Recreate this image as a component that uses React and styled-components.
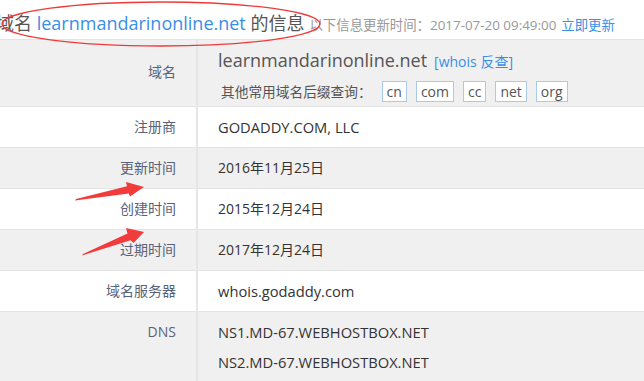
import React from "react";
import styled, { createGlobalStyle } from "styled-components";

const Global = createGlobalStyle`
  html, body { margin: 0; padding: 0; background: #fff; }
  body {
    font-family: "Open Sans", "Noto Sans CJK SC", sans-serif;
    overflow: hidden;
    width: 644px;
    height: 381px;
  }
`;

const Page = styled.div`
  position: relative;
  width: 644px;
  height: 381px;
  overflow: hidden;
`;

const Header = styled.div`
  display: flex;
  align-items: baseline;
  height: 39px;
  margin-left: -4px;
  white-space: nowrap;
`;

const Title = styled.h1`
  margin: 0;
  font-size: 18px;
  font-weight: normal;
  color: #555;
  line-height: 46px;
`;

const TitleLink = styled.span`
  color: #3a8ee6;
`;

const Meta = styled.span`
  margin-left: 5px;
  font-size: 13.4px;
  color: #999;
`;

const MetaLink = styled.a`
  margin-left: 5px;
  color: #3a8ee6;
  text-decoration: none;
`;

const Table = styled.div`
  display: grid;
  grid-template-columns: 198px 1fr;
  border-top: 1px solid #e4e4e4;
  width: 660px;
`;

const Label = styled.div`
  background: ${(p) => (p.$alt ? "#f0f0f0" : "#fff")};
  border-right: 2px solid #e6e6e6;
  border-bottom: 1px solid #e4e4e4;
  height: ${(p) => p.$h}px;
  box-sizing: border-box;
  text-align: right;
  padding-right: 20px;
  padding-top: ${(p) => p.$pt || 11}px;
  font-size: 14px;
  color: #5a6278;
  line-height: 18px;
`;

const Value = styled.div`
  background: ${(p) => (p.$alt ? "#f0f0f0" : "#fff")};
  border-bottom: 1px solid #e4e4e4;
  height: ${(p) => p.$h}px;
  box-sizing: border-box;
  padding-left: 20px;
  padding-top: ${(p) => p.$pt || 11}px;
  font-size: ${(p) => (p.$latin ? "14.7px" : "14px")};
  color: #333;
  line-height: 18px;
`;

const Domain = styled.div`
  font-size: 18px;
  color: #555;
  line-height: 24px;
  display: flex;
  align-items: baseline;
`;

const Whois = styled.a`
  margin-left: 7px;
  font-size: 14px;
  color: #3a8ee6;
  text-decoration: none;
`;

const Suffixes = styled.div`
  display: flex;
  align-items: center;
  margin-top: 7px;
  margin-left: 3px;
  font-size: 13.7px;
  color: #555;
`;

const SuffixLabel = styled.span`
  margin-right: 1px;
`;

const Suffix = styled.a`
  display: inline-block;
  border: 1px solid #a9cbe8;
  background: #fff;
  padding: 0 4px;
  margin-left: 9px;
  height: 21px;
  line-height: 19px;
  box-sizing: border-box;
  color: #555;
  text-decoration: none;
  font-size: 14px;
`;

const DnsLine = styled.div`
  line-height: 18px;
  & + & {
    margin-top: 12px;
  }
`;

const Overlay = styled.svg`
  position: absolute;
  left: 0;
  top: 0;
  pointer-events: none;
`;

const rows = [
  { label: "注册商", value: "GODADDY.COM, LLC", latin: true },
  { label: "更新时间", value: "2016年11月25日", alt: true },
  { label: "创建时间", value: "2015年12月24日" },
  { label: "过期时间", value: "2017年12月24日", alt: true },
  { label: "域名服务器", value: "whois.godaddy.com", latin: true },
];

export default function App() {
  return (
    <Page>
      <Global />
      <Header>
        <Title>
          域名 <TitleLink>learnmandarinonline.net</TitleLink> 的信息
        </Title>
        <Meta>
          以下信息更新时间：2017-07-20 09:49:00
          <MetaLink href="#">立即更新</MetaLink>
        </Meta>
      </Header>
      <Table>
        <Label $alt $h={67} $pt={23}>域名</Label>
        <Value $alt $h={67} $pt={8}>
          <Domain>
            learnmandarinonline.net<Whois href="#">[whois 反查]</Whois>
          </Domain>
          <Suffixes>
            <SuffixLabel>其他常用域名后缀查询：</SuffixLabel>
            {["cn", "com", "cc", "net", "org"].map((s) => (
              <Suffix key={s} href="#">{s}</Suffix>
            ))}
          </Suffixes>
        </Value>
        {rows.map((r) => (
          <React.Fragment key={r.label}>
            <Label $alt={r.alt} $h={41}>{r.label}</Label>
            <Value $alt={r.alt} $h={41} $latin={r.latin}>{r.value}</Value>
          </React.Fragment>
        ))}
        <Label $alt $h={80}>DNS</Label>
        <Value $alt $h={80} $latin>
          <DnsLine>NS1.MD-67.WEBHOSTBOX.NET</DnsLine>
          <DnsLine>NS2.MD-67.WEBHOSTBOX.NET</DnsLine>
        </Value>
      </Table>
      <Overlay width="644" height="381" viewBox="0 0 644 381">
        <ellipse cx="161" cy="24" rx="159" ry="22" fill="none" stroke="#f03a3a" strokeWidth="1.3" />
        <polygon points="75,200.5 76,199 127,186.3 126,182 144,187 130,196.5 128.8,193.6" fill="#f23b3b" />
        <polygon points="82,255.5 83,254 127.5,233.5 126,228 144,232 133.5,243 130.6,240.3" fill="#f23b3b" />
      </Overlay>
    </Page>
  );
}
